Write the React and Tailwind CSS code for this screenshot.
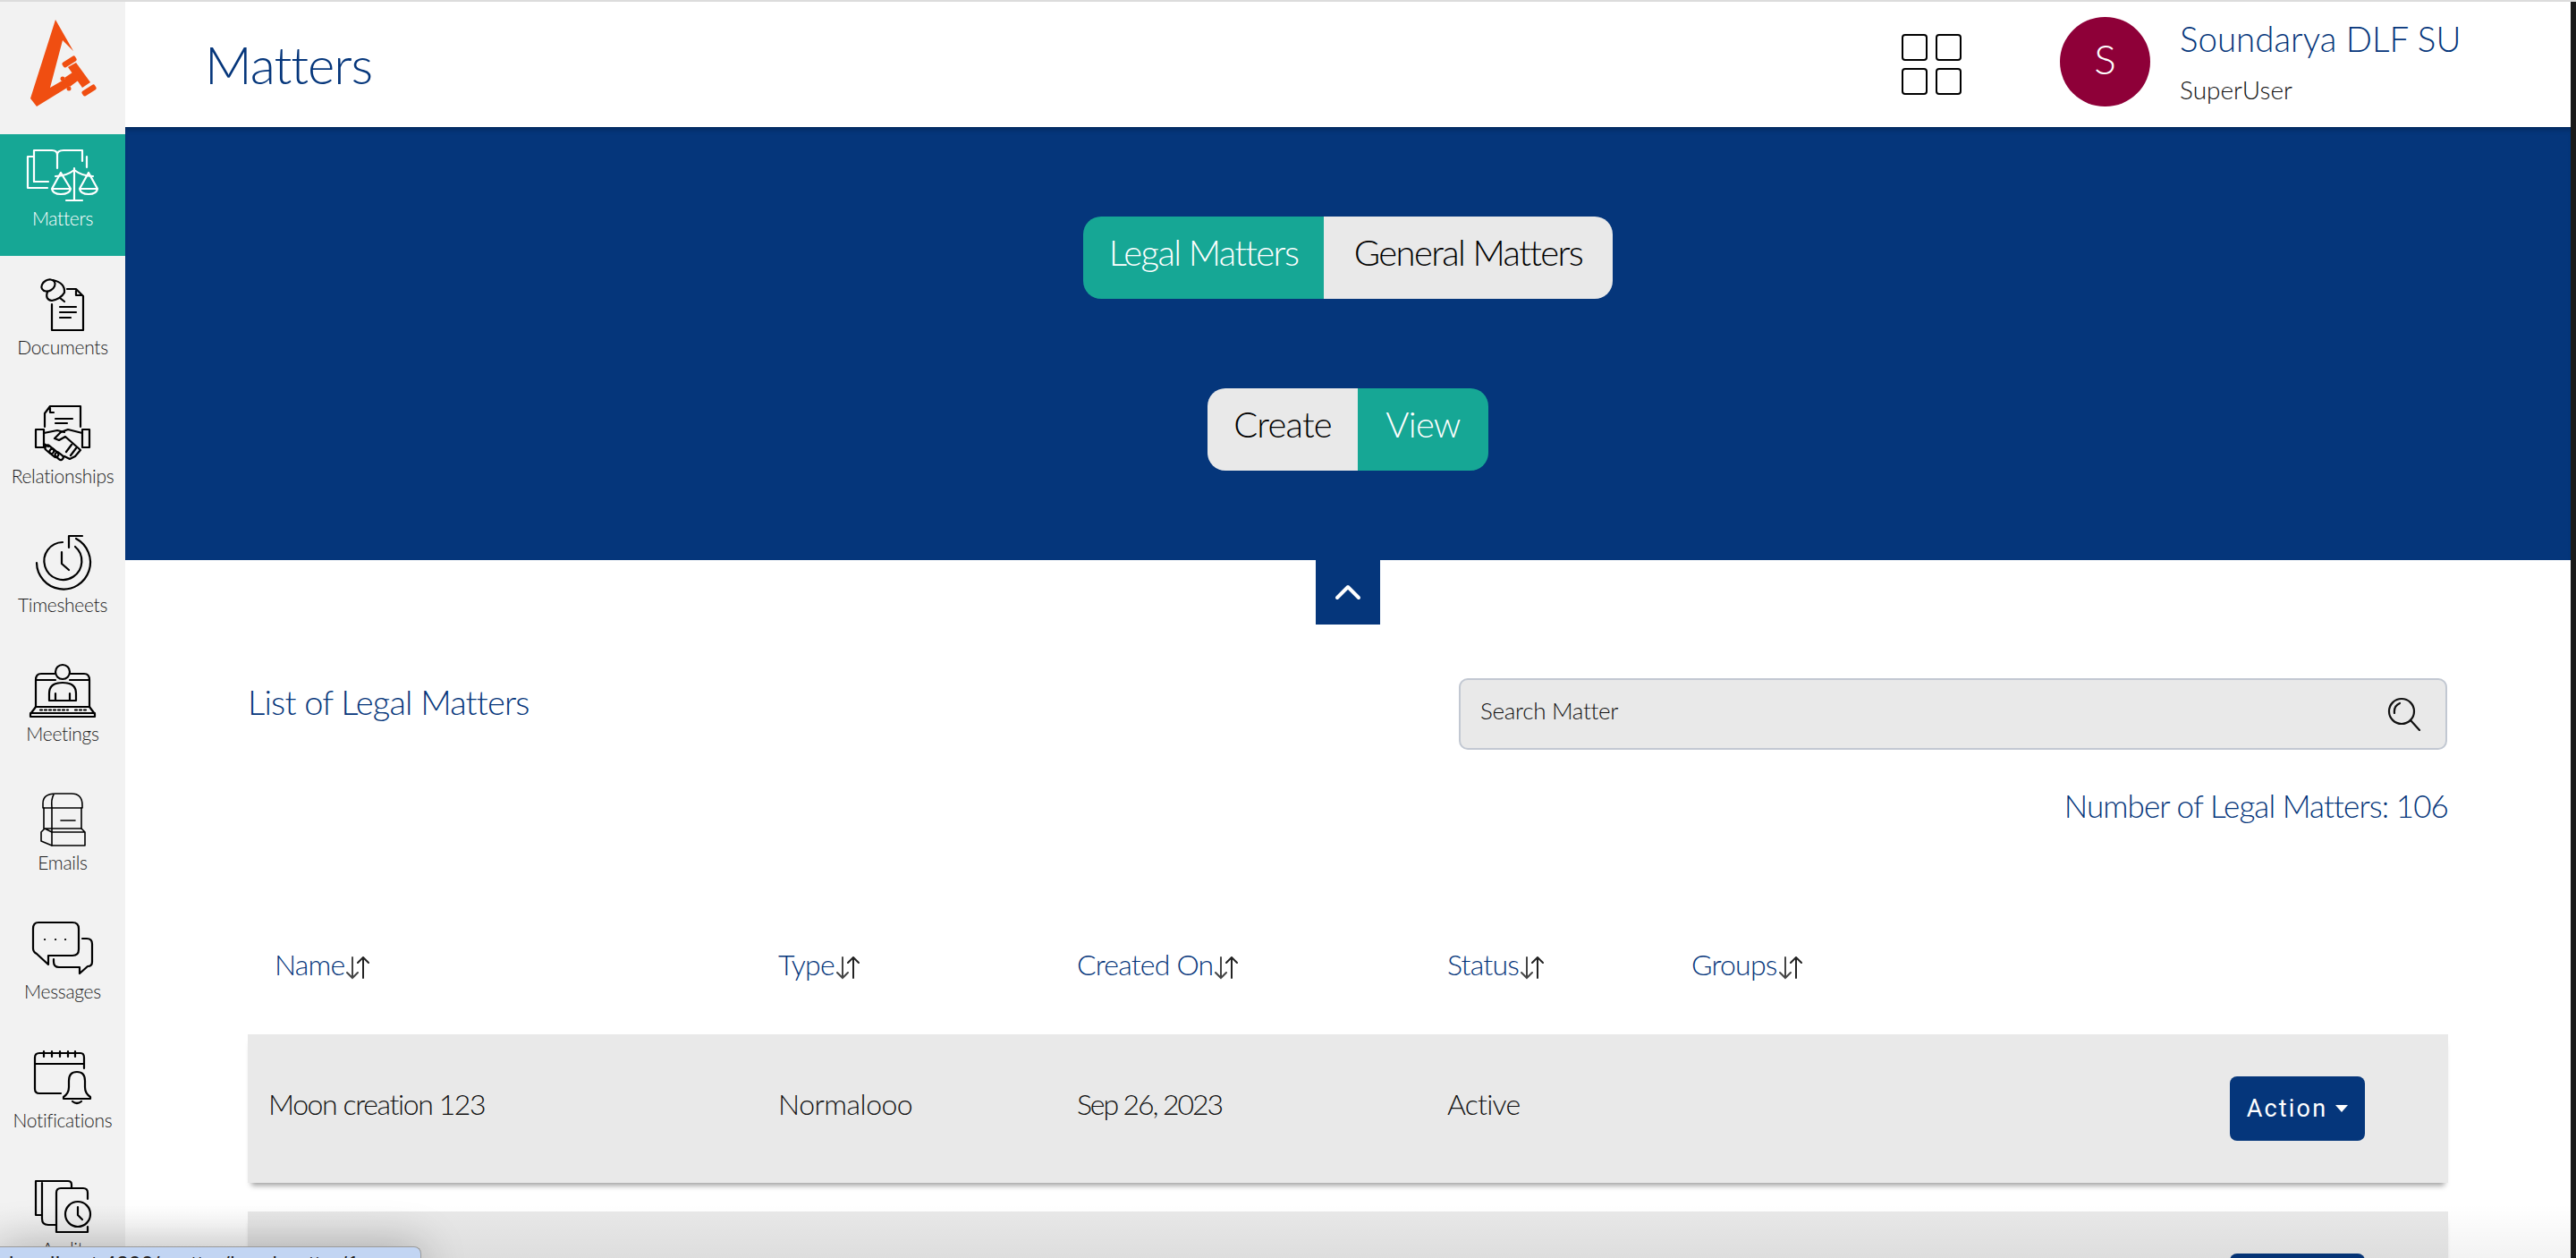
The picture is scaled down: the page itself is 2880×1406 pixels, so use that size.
import React from 'react';

const line = { fill: 'none', stroke: 'currentColor', strokeWidth: 2.2, strokeLinecap: 'round', strokeLinejoin: 'round' };

function NavIcon({ top, children }) {
  // paths below are written in page coordinates, so the viewBox follows the item's top
  return (
    <svg width="90" height="70" viewBox={`25 ${top + 10} 90 70`} {...line}>
      {children}
    </svg>
  );
}

function Logo() {
  return (
    <svg width="140" height="148" viewBox="0 2 140 148">
      <g fill="#f04e11">
        <polygon points="62,22 82,57 70,45 56,98 75,87 80,95 41,119 34,110" />
        <rect x="69" y="66" width="17" height="6.5" rx="2" transform="rotate(-32 77 69)" />
        <rect x="91" y="98" width="17" height="6.5" rx="2" transform="rotate(-32 99 101)" />
        <polygon points="76,75 85,70 101,92 92,98" />
        <polygon points="72,87 78,97 90,88 84,79" />
        <circle cx="70" cy="88" r="2.5" />
        <circle cx="77" cy="99" r="2.5" />
      </g>
    </svg>
  );
}

const navItems = [
  {
    label: 'Matters',
    active: true,
    top: 150,
    icon: (
      <>
        <path d="M38 175H31V210H53" />
        <path d="M38 203V168H58Q64 168 64 173V188M64 173Q64 168 71 168H92V180" />
        <path d="M38 203H54M97 175V187" />
        <path d="M83 188V224M74 224H92M62 197Q74 197 83 190Q92 197 104 197" />
        <path d="M68 193L58 211H79L68 193ZM58 211Q59 217 68 217Q78 217 79 211" />
        <path d="M99 193L89 211H109L99 193ZM89 211Q90 217 99 217Q108 217 109 211" />
      </>
    ),
  },
  {
    label: 'Documents',
    top: 294,
    icon: (
      <>
        <path d="M75 323H85L93 331V369H58V340" />
        <path d="M85 325V330H91M67 343H85M67 349H85M67 355H79" />
        <ellipse cx="54" cy="319" rx="8" ry="6" transform="rotate(-30 54 319)" />
        <path d="M59 313Q73 316 72 327Q68 334 58 336Q50 335 53 326" />
        <path d="M67 333L72 337" />
      </>
    ),
  },
  {
    label: 'Relationships',
    top: 438,
    icon: (
      <>
        <path d="M50 477V462L56 454H90V477M56 456V461H60M62 468H81M62 473H75" />
        <rect x="40" y="480" width="9" height="20" />
        <rect x="92" y="480" width="8" height="20" />
        <path d="M49 484L64 481L72 483M92 484L76 480L68 483L61 490L66 492L73 488L90 503L84 510L78 513L72 510" />
        <path d="M49 496L54 499M80 497L74 505M85 501L79 509" />
        <rect x="50" y="499" width="11" height="6" rx="3" transform="rotate(40 55 502)" />
        <rect x="55" y="503" width="11" height="6" rx="3" transform="rotate(40 60 506)" />
        <rect x="61" y="507" width="10" height="5.5" rx="2.7" transform="rotate(40 66 510)" />
      </>
    ),
  },
  {
    label: 'Timesheets',
    top: 582,
    icon: (
      <>
        <path d="M70 606A21 21 0 1 0 84 611" />
        <path d="M41 629A30 30 0 1 0 85 602" />
        <path d="M92 599H77V612" />
        <path d="M69 617V630L77 637" />
      </>
    ),
  },
  {
    label: 'Meetings',
    top: 726,
    icon: (
      <>
        <circle cx="70" cy="751" r="8" />
        <path d="M61 753H46Q40 753 40 760V790M79 753H94Q100 753 100 760V790M40 760H62M78 760H100" />
        <path d="M55 783V775Q55 763 70 763Q85 763 85 775V783ZM62 775V783M78 775V783" />
        <path d="M40 790L34 798V801H106V798L100 790ZM34 797H106" />
        <path d="M45 793.5H76M84 793.5H97" strokeDasharray="2 3" />
      </>
    ),
  },
  {
    label: 'Emails',
    top: 870,
    icon: (
      <g strokeWidth="1.6">
        <path d="M48 903V898Q48 887 62 887H80Q92 887 92 900V903ZM60 888Q57 893 58 903" />
        <path d="M49 903V926M58 903V945M91 903V926M68 917H84" />
        <path d="M50 926H91L95 930V945H58L46 940V930ZM58 930H95M50 926L58 930" />
      </g>
    ),
  },
  {
    label: 'Messages',
    top: 1014,
    icon: (
      <>
        <path d="M43 1031H81Q88 1031 88 1038V1061Q88 1068 81 1068H54V1078L41 1066Q37 1064 37 1060V1038Q37 1031 43 1031Z" />
        <path d="M92 1049H97Q103 1049 103 1055V1075Q103 1080 98 1080L89 1088V1081H66Q60 1081 60 1075V1072" />
        <path d="M50 1050H50.1M62 1050H62.1M73 1050H73.1" />
      </>
    ),
  },
  {
    label: 'Notifications',
    top: 1158,
    icon: (
      <>
        <path d="M68 1222H44Q39 1222 39 1217V1182Q39 1177 44 1177H90Q94 1177 94 1182V1194M39 1189H94" />
        <path d="M49 1175V1181M58 1175V1181M67 1175V1181M76 1175V1181M84 1175V1181" />
        <path d="M71 1226Q77 1222 77 1215V1208Q77 1198 86 1198Q95 1198 95 1208V1215Q95 1222 101 1226V1228H71Z" />
        <path d="M81 1231Q86 1235 91 1231" />
      </>
    ),
  },
  {
    label: 'Audit',
    top: 1302,
    icon: (
      <>
        <path d="M46 1358H40V1320H76Q80 1320 80 1324V1327" />
        <path d="M62 1369H54Q47 1369 47 1362V1322" />
        <path d="M98 1340V1333Q98 1328 93 1328H68Q63 1328 63 1333V1377H98V1371" />
        <circle cx="87" cy="1357" r="14" />
        <path d="M87 1349V1358L92 1363" />
      </>
    ),
  },
];

function SortIcon() {
  return (
    <svg className="ml-[2px] mt-[8px] shrink-0" width="26" height="26" viewBox="387 1070 26 26" fill="none" strokeWidth="2" strokeLinecap="round">
      <path d="M394 1071V1094M388 1088L394 1094L400 1088" stroke="#444" />
      <path d="M406 1094V1071M400 1077L406 1071L412 1077" stroke="#222" />
    </svg>
  );
}

function Sidebar() {
  return (
    <aside className="w-[140px] shrink-0 bg-[#f2f2f2] flex flex-col">
      <div className="h-[148px]">
        <Logo />
      </div>
      {navItems.map((item) => (
        <div
          key={item.label}
          className={`h-[136px] shrink-0 mb-2 pt-[10px] flex flex-col items-center ${item.active ? 'bg-[#16a795] text-white' : 'text-black'}`}
        >
          <NavIcon top={item.top}>{item.icon}</NavIcon>
          <span className={`mt-[2px] h-6 text-[21px] leading-6 tracking-[-0.3px] ${item.active ? 'text-white' : 'text-[#1c1c1c]'}`}>
            {item.label}
          </span>
        </div>
      ))}
    </aside>
  );
}

function Header() {
  return (
    <header className="h-[140px] shrink-0 bg-white flex items-center pl-[89px]">
      <h1 className="text-[58px] leading-none text-[#05367b] tracking-[-1px]">Matters</h1>
      <div className="ml-auto grid grid-cols-2 gap-x-[9px] gap-y-2">
        <span className="w-[29px] h-[30px] rounded-[4px] border-2 border-black" />
        <span className="w-[29px] h-[30px] rounded-[4px] border-2 border-black" />
        <span className="w-[29px] h-[30px] rounded-[4px] border-2 border-black" />
        <span className="w-[29px] h-[30px] rounded-[4px] border-2 border-black" />
      </div>
      <div className="ml-[110px] w-[101px] h-[100px] pb-2 rounded-full bg-[#8e0038] text-white text-[46px] font-light flex items-center justify-center -mt-[6px]">
        S
      </div>
      <div className="ml-[33px] w-[437px] flex flex-col -mt-2">
        <span className="text-[38.5px] leading-[50px] text-[#05367b]">Soundarya DLF SU</span>
        <span className="mt-[13px] text-[28px] leading-[38px] text-[#111]">SuperUser</span>
      </div>
    </header>
  );
}

function Toggle({ options }) {
  return (
    <div className="flex rounded-[20px] overflow-hidden">
      {options.map((opt) => (
        <button
          key={opt.label}
          className={`h-[92px] pb-3 text-[40px] ${opt.width} ${opt.active ? 'bg-[#16a795] text-white' : 'bg-[#e9e9e9] text-black'}`}
        >
          {opt.label}
        </button>
      ))}
    </div>
  );
}

function Banner() {
  return (
    <>
      <section className="h-[484px] shrink-0 bg-[#05367b] flex flex-col items-center justify-center gap-[100px] shadow-[inset_0_6px_6px_-4px_rgba(0,0,0,0.3)]">
        <Toggle
          options={[
            { label: 'Legal Matters', active: true, width: 'w-[269px] tracking-[-1.6px]' },
            { label: 'General Matters', width: 'w-[323px] tracking-[-1.6px]' },
          ]}
        />
        <Toggle
          options={[
            { label: 'Create', width: 'w-[168px] tracking-[-0.8px]' },
            { label: 'View', active: true, width: 'w-[146px] tracking-[-0.8px]' },
          ]}
        />
      </section>
      <div className="w-[72px] h-[72px] shrink-0 mx-auto bg-[#05367b] text-white flex items-center justify-center">
        <svg width="30" height="18" viewBox="0 0 30 18" fill="none" stroke="currentColor" strokeWidth="4" strokeLinecap="round" strokeLinejoin="round">
          <path d="M3 15L15 3L27 15" />
        </svg>
      </div>
    </>
  );
}

const columns = ['Name', 'Type', 'Created On', 'Status', 'Groups'];
const rowGrid = 'grid grid-cols-[593px_334px_414px_273px_1fr]';

function MatterRow({ name, type, created, status }) {
  return (
    <div className={`${rowGrid} h-[166px] shrink-0 mb-8 items-center bg-[#e9e9e9] shadow-[0_7px_6px_-4px_rgba(0,0,0,0.38)] text-[32px] text-[#111]`}>
      <span className="pl-[23px] -mt-[10px] tracking-[-1.4px]">{name}</span>
      <span className="-mt-[10px] tracking-[-0.5px]">{type}</span>
      <span className="-mt-[10px] tracking-[-2.1px]">{created}</span>
      <span className="-mt-[10px] tracking-[-0.8px]">{status}</span>
      <div className="flex justify-end pr-[93px]">
        <button className="w-[151px] h-[72px] rounded-lg bg-[#05367b] text-white flex items-center justify-center gap-[9px] font-['Roboto',sans-serif] font-normal text-[27px] tracking-[2.2px]">
          Action
          <svg width="14" height="8" viewBox="0 0 14 8" fill="currentColor">
            <path d="M0 0H14L7 8Z" />
          </svg>
        </button>
      </div>
    </div>
  );
}

function MatterList() {
  return (
    <section className="px-[137px] pt-[60px] flex flex-col">
      <div className="flex justify-between items-start">
        <h2 className="mt-[6px] text-[38px] leading-10 text-[#05367b] tracking-[-0.8px]">List of Legal Matters</h2>
        <div className="w-[1105px] h-20 mr-px pl-[22px] pr-[27px] flex items-center justify-between rounded-[10px] border-2 border-[#c2c8d2] bg-[#e9e9e9]">
          <span className="pb-2 text-[26px] text-[#111] tracking-[-0.3px]">Search Matter</span>
          <svg width="38" height="38" viewBox="0 0 38 38" fill="none" stroke="#111" strokeWidth="2.2" strokeLinecap="round">
            <circle cx="16" cy="16" r="14" />
            <path d="M26 26L36 37M8 18Q7 10 14 7" />
          </svg>
        </div>
      </div>
      <p className="mt-[42px] mb-[2px] h-10 text-right text-[35px] leading-10 text-[#05367b] tracking-[-0.9px]">Number of Legal Matters: 106</p>
      <div className={`${rowGrid} mt-[132px] h-10 items-center text-[32px] text-[#05367b] tracking-[-0.8px]`}>
        {columns.map((col, i) => (
          <div key={col} className={`flex items-center ${i === 0 ? 'pl-[30px]' : ''}`}>
            {col}
            <SortIcon />
          </div>
        ))}
      </div>
      <div className="mt-[62px] flex flex-col">
        <MatterRow name="Moon creation 123" type="Normalooo" created="Sep 26, 2023" status="Active" />
        <MatterRow name="" type="" created="" status="" />
      </div>
    </section>
  );
}

export default function App() {
  return (
    <div className="relative w-[2880px] h-[1406px] overflow-hidden bg-white font-['Lato',sans-serif] font-light">
      <div className="h-[2px] bg-[#dcdcdc]" />
      <div className="flex h-[1404px]">
        <Sidebar />
        <main className="flex-1 min-w-0 flex flex-col overflow-hidden">
          <Header />
          <Banner />
          <MatterList />
        </main>
        <div className="w-[6px] shrink-0 bg-[#1a1a1a]" />
      </div>

      {/* browser status bubble and its soft shadow, sitting over the page */}
      <div className="absolute inset-x-0 bottom-0 h-[60px] bg-gradient-to-t from-black/5 to-transparent" />
      <div className="absolute left-0 top-[1393px] w-[471px] h-[40px] rounded-tr-lg border-t border-r border-[#9a9a9a] bg-[#c2d5f3] pl-[10px] pt-[5px] shadow-[0_0_50px_rgba(0,0,0,0.28)] font-['Liberation_Sans',sans-serif] font-normal text-[24px] leading-[28px] tracking-[0.5px] text-[#222] whitespace-nowrap overflow-hidden">
        localhost:4200/matter/legalmatter/1
      </div>
    </div>
  );
}
